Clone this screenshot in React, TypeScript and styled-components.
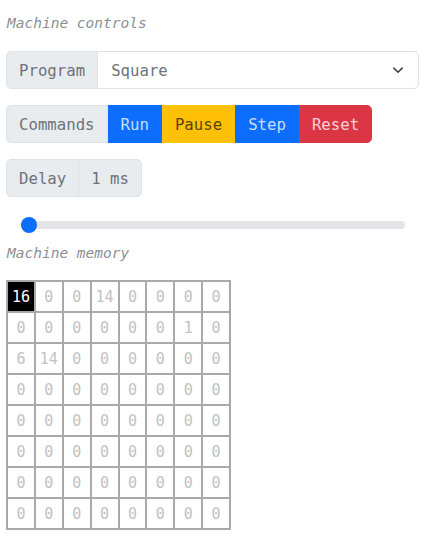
import styled, { createGlobalStyle } from "styled-components";

import type { FC } from "react";

const memory: number[] = [
  16, 0, 0, 14, 0, 0, 0, 0,
  0, 0, 0, 0, 0, 0, 1, 0,
  6, 14, 0, 0, 0, 0, 0, 0,
  ...Array(40).fill(0),
];

const commands = [
  { label: "Run", bg: "#0d6efd", fg: "rgba(255, 255, 255, 0.78)" },
  { label: "Pause", bg: "#ffc107", fg: "rgba(40, 30, 0, 0.8)" },
  { label: "Step", bg: "#0d6efd", fg: "rgba(255, 255, 255, 0.78)" },
  { label: "Reset", bg: "#dc3545", fg: "rgba(255, 255, 255, 0.78)" },
];

const App: FC = () => {
  return (
    <Wrapper>
      <GlobalStyle />
      <Heading>Machine controls</Heading>

      <InputGroup $full>
        <Addon>Program</Addon>
        <SelectBox>
          <span>Square</span>
          <svg width="12" height="12" viewBox="0 0 16 16">
            <path d="M2.5 5.5l5.5 5.5 5.5-5.5" fill="none" stroke="#343a40" strokeWidth="2" strokeLinecap="round" strokeLinejoin="round" />
          </svg>
        </SelectBox>
      </InputGroup>

      <InputGroup>
        <Addon>Commands</Addon>
        {commands.map((c) => (
          <CommandButton key={c.label} $bg={c.bg} $fg={c.fg}>
            {c.label}
          </CommandButton>
        ))}
      </InputGroup>

      <InputGroup>
        <Addon>Delay</Addon>
        <Addon>1 ms</Addon>
      </InputGroup>

      <Range type="range" min={1} max={1000} defaultValue={1} />

      <Heading $memory>Machine memory</Heading>

      <MemoryGrid>
        {memory.map((v, i) => (
          <Cell key={i} $active={i === 0}>
            {v}
          </Cell>
        ))}
      </MemoryGrid>
    </Wrapper>
  );
};

export default App;

const GlobalStyle = createGlobalStyle`
  body {
    margin: 0;
    background: #ffffff;
    font-family: "DejaVu Sans Mono", "Liberation Mono", monospace;
  }
`;

const Wrapper = styled.div`
  display: flex;
  flex-direction: column;
  align-items: flex-start;
  padding: 12px 5px 0 6px;
`;

const Heading = styled.div<{ $memory?: boolean }>`
  font-size: 14.5px;
  line-height: 22px;
  font-style: italic;
  color: #8a8f95;
  padding-left: 1px;
  margin: ${(p) => (p.$memory ? "5px 0 16px" : "0 0 17px")};
`;

const InputGroup = styled.div<{ $full?: boolean }>`
  display: flex;
  height: 38px;
  margin-bottom: 16px;
  width: ${(p) => (p.$full ? "413px" : "auto")};

  & > *:first-child {
    border-top-left-radius: 5px;
    border-bottom-left-radius: 5px;
  }
  & > *:last-child {
    border-top-right-radius: 5px;
    border-bottom-right-radius: 5px;
  }
`;

const Addon = styled.div`
  display: flex;
  align-items: center;
  padding: 0 12px;
  font-size: 15.7px;
  color: #6c737a;
  background: #e9ecef;
  border: 1px solid #dee2e6;
  & + & {
    margin-left: -1px;
  }
`;

const SelectBox = styled.div`
  flex: 1;
  display: flex;
  align-items: center;
  justify-content: space-between;
  padding: 0 14px 0 13px;
  margin-left: -1px;
  font-size: 15.7px;
  color: #6c737a;
  background: #ffffff;
  border: 1px solid #dee2e6;
`;

const CommandButton = styled.div<{ $bg: string; $fg: string }>`
  display: flex;
  align-items: center;
  padding: 0 12px;
  font-size: 15.7px;
  color: ${(p) => p.$fg};
  background: ${(p) => p.$bg};
  border: 1px solid ${(p) => p.$bg};
`;

const Range = styled.input`
  -webkit-appearance: none;
  appearance: none;
  width: 384px;
  height: 24px;
  margin: 0 0 0 15px;
  padding: 0;
  background: transparent;

  &::-webkit-slider-runnable-track {
    height: 8px;
    border-radius: 4px;
    background: #e2e4e8;
  }
  &::-webkit-slider-thumb {
    -webkit-appearance: none;
    width: 16px;
    height: 16px;
    margin-top: -4px;
    border: 0;
    border-radius: 50%;
    background: #0d6efd;
  }
`;

const MemoryGrid = styled.div`
  display: grid;
  grid-template-columns: repeat(8, 1fr);
  grid-auto-rows: 31px;
  width: 223px;
  border: 1px solid #a9a9a9;
`;

const Cell = styled.div<{ $active?: boolean }>`
  display: flex;
  align-items: center;
  justify-content: center;
  font-size: 15px;
  color: ${(p) => (p.$active ? "#ffffff" : "#c2c2c2")};
  background: ${(p) => (p.$active ? "#000000" : "#ffffff")};
  border: 1px solid #a9a9a9;
`;
